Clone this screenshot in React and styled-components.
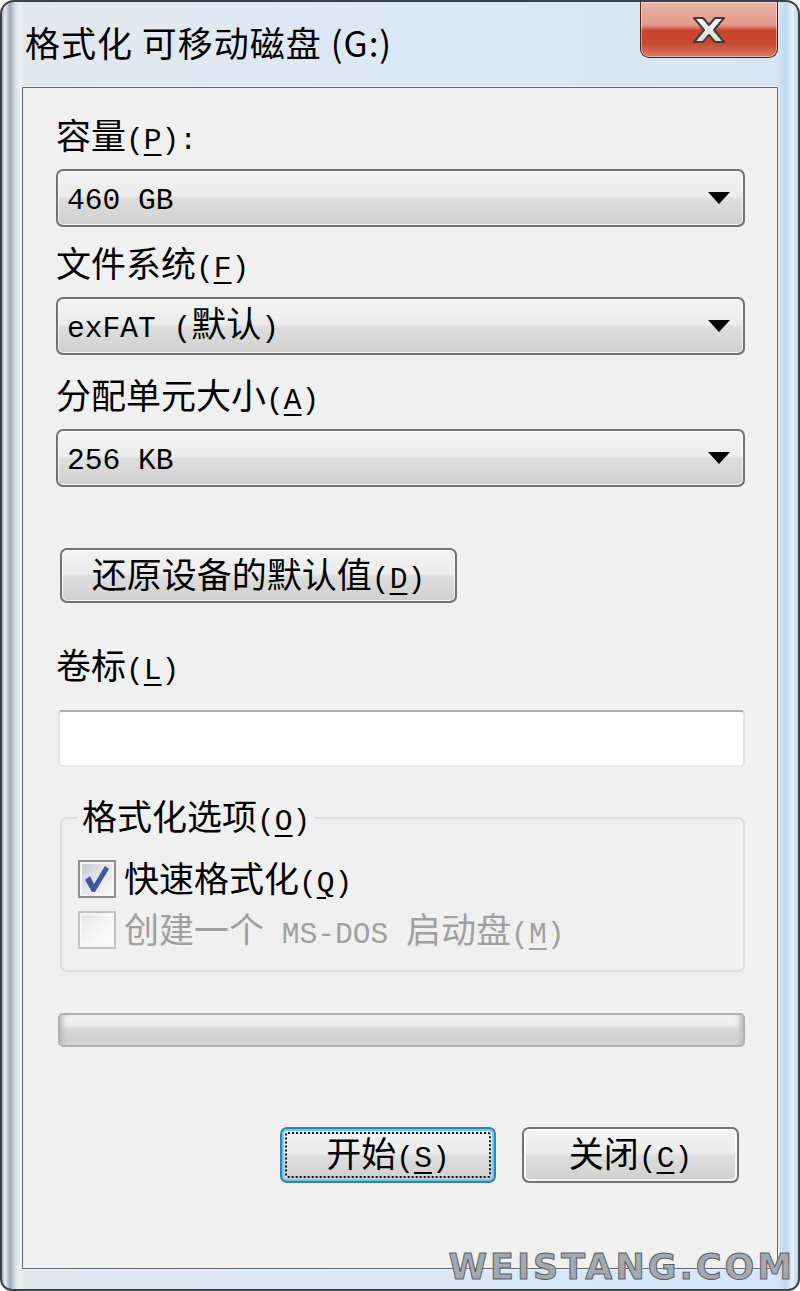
import styled, { createGlobalStyle } from 'styled-components'

const CJK = `"Noto Sans CJK SC", "Noto Sans", sans-serif`

const GlobalStyle = createGlobalStyle`
	html, body {
		margin: 0;
		padding: 0;
		background: #fff;
	}
	* {
		box-sizing: border-box;
	}
`

// renders a Windows style caption: ascii runs half width, "&X" underlined mnemonic
function Caption({ text }) {
	const out = []
	let buf = ''
	let half = null
	const flush = () => {
		if (!buf) return
		out.push(half ? <Half key={out.length}>{buf}</Half> : <span key={out.length}>{buf}</span>)
		buf = ''
	}
	for (let i = 0; i < text.length; i++) {
		const c = text[i]
		if (c === '&') {
			flush()
			i++
			out.push(
				<Half key={out.length}>
					<u>{text[i]}</u>
				</Half>
			)
			half = true
			continue
		}
		const h = c.charCodeAt(0) < 128
		if (h !== half) flush()
		half = h
		buf += c
	}
	flush()
	return <Line>{out}</Line>
}

export default function App() {
	return (
		<>
			<GlobalStyle />
			<Window>
				<TitleBar>
					<Title>格式化 可移动磁盘 (G:)</Title>
					<CloseButton>
						<svg width='36' height='28' viewBox='0 0 36 28'>
							<defs>
								<linearGradient id='xg' x1='0' y1='0' x2='0' y2='1'>
									<stop offset='0' stopColor='#ffffff' />
									<stop offset='1' stopColor='#d9d9d9' />
								</linearGradient>
							</defs>
							<path
								d='M3 2 L12 2 L18 9 L24 2 L33 2 L23 14 L33 26 L24 26 L18 19 L12 26 L3 26 L13 14 Z'
								fill='url(#xg)'
								stroke='#3d3d3d'
								strokeWidth='2'
								strokeLinejoin='round'
							/>
						</svg>
					</CloseButton>
				</TitleBar>

				<Client>
					<Label>
						<Caption text='容量(&P):' />
					</Label>
					<Combo>
						<Caption text='460 GB' />
						<Arrow />
					</Combo>

					<Label $top={18}>
						<Caption text='文件系统(&F)' />
					</Label>
					<Combo>
						<Caption text='exFAT (默认)' />
						<Arrow />
					</Combo>

					<Label $top={22}>
						<Caption text='分配单元大小(&A)' />
					</Label>
					<Combo>
						<Caption text='256 KB' />
						<Arrow />
					</Combo>

					<RestoreButton>
						<Caption text='还原设备的默认值(&D)' />
					</RestoreButton>

					<Label $top={44}>
						<Caption text='卷标(&L)' />
					</Label>
					<TextBox />

					<Group>
						<Legend>
							<Caption text='格式化选项(&O)' />
						</Legend>
						<CheckRow $top={21}>
							<Box>
								<svg width='28' height='30' viewBox='0 0 28 30'>
									<path d='M2 16 L7 12 L11 20 L22 2 L26 5 L12 28 L9 28 Z' fill='#3f5a9c' />
								</svg>
							</Box>
							<Caption text='快速格式化(&Q)' />
						</CheckRow>
						<CheckRow $top={11} $disabled>
							<Box $disabled />
							<Caption text='创建一个 MS-DOS 启动盘(&M)' />
						</CheckRow>
					</Group>

					<Progress />

					<ButtonRow>
						<PushButton $w={216} $default>
							<Focus>
								<Caption text='开始(&S)' />
							</Focus>
						</PushButton>
						<PushButton $w={217}>
							<Focus $none>
								<Caption text='关闭(&C)' />
							</Focus>
						</PushButton>
					</ButtonRow>
				</Client>

				<Watermark>WEISTANG.COM</Watermark>
			</Window>
		</>
	)
}

function Arrow() {
	return (
		<svg width='22' height='12' viewBox='0 0 22 12'>
			<path d='M0 0 H22 L11 12 Z' fill='#000' />
		</svg>
	)
}

const Window = styled.div`
	position: relative;
	width: 800px;
	height: 1291px;
	display: flex;
	flex-direction: column;
	padding: 0 20px 20px;
	border: 2px solid #39414b;
	border-radius: 14px 14px 12px 12px;
	overflow: hidden;
	background:
		linear-gradient(to right, #aab3bc 0px, #e9eef3 3px, #9ea9b4 8px, #d5dde5 13px, #eef2f6 18px, rgba(255, 255, 255, 0) 22px),
		linear-gradient(to left, #b9cfe6 0px, #e8f1fa 5px, #c3d8ee 12px, rgba(255, 255, 255, 0) 22px),
		linear-gradient(to right, #e3e7ec 0%, #dfe9f4 30%, #d6e6f6 100%);
`

const TitleBar = styled.div`
	height: 85px;
	display: flex;
	justify-content: space-between;
	align-items: flex-start;
`

const Title = styled.div`
	padding: 20px 0 0 3px;
	font-family: ${CJK};
	font-size: 35px;
	line-height: 40px;
	letter-spacing: 1px;
	color: #000;
	white-space: nowrap;
`

const CloseButton = styled.div`
	width: 138px;
	height: 56px;
	display: flex;
	align-items: center;
	justify-content: center;
	border: 1px solid #4d211a;
	border-top: none;
	border-radius: 0 0 9px 9px;
	background: linear-gradient(to bottom, #ebb2a8 0%, #e39a8b 42%, #c8432c 52%, #c9492f 75%, #d97b62 100%);
	box-shadow: inset 0 0 0 1px rgba(255, 255, 255, 0.45);
`

const Client = styled.div`
	flex: 1;
	display: flex;
	flex-direction: column;
	align-items: stretch;
	padding: 29px 32px 0 33px;
	background: #f0f0f0;
	border: 1px solid #5c6774;
	box-shadow: 0 0 0 1px rgba(255, 255, 255, 0.55);
	font-family: ${CJK};
	font-size: 35px;
	line-height: 40px;
	color: #000;
`

const Line = styled.span`
	white-space: nowrap;
`

const Half = styled.span`
	font-family: 'Liberation Mono', monospace;
	font-size: 29.6px;
	line-height: 1;
	white-space: pre;

	u {
		text-decoration-thickness: 2px;
		text-underline-offset: 5px;
	}
`

const Label = styled.div`
	margin-top: ${(p) => p.$top || 0}px;
	height: 40px;
	line-height: 34px;
`

const Combo = styled.div`
	height: 58px;
	margin-top: 12px;
	display: flex;
	align-items: center;
	justify-content: space-between;
	padding: 0 13px 5px 9px;
	border: 2px solid #727272;
	border-radius: 7px;
	background: linear-gradient(to bottom, #f3f3f3 0%, #ececec 46%, #dddddd 52%, #d0d0d0 100%);
	box-shadow: inset 0 0 0 1px rgba(255, 255, 255, 0.75);

	svg {
		margin-top: 5px;
	}
`

const RestoreButton = styled.div`
	width: 397px;
	height: 55px;
	margin: 61px 0 0 4px;
	padding-bottom: 3px;
	display: flex;
	align-items: center;
	justify-content: center;
	border: 2px solid #727272;
	border-radius: 7px;
	background: linear-gradient(to bottom, #f3f3f3 0%, #ececec 46%, #dddddd 52%, #d0d0d0 100%);
	box-shadow: inset 0 0 0 1px rgba(255, 255, 255, 0.8);
`

const TextBox = styled.div`
	height: 57px;
	margin: 23px 0 0 2px;
	background: #fff;
	border: 2px solid #e2e3ea;
	border-top-color: #abadb3;
	border-bottom-color: #e3e9ef;
	border-radius: 4px;
`

const Group = styled.fieldset`
	margin: 31px 0 0 4px;
	padding: 0 0 20px 16px;
	min-inline-size: 0;
	border: 2px solid #d7dfe5;
	border-radius: 7px;
`

const Legend = styled.legend`
	margin-left: 0;
	padding: 0 4px;
	height: 40px;
	line-height: 34px;
`

const CheckRow = styled.div`
	margin-top: ${(p) => p.$top}px;
	height: 40px;
	display: flex;
	align-items: center;
	gap: 8px;
	line-height: 36px;
	color: ${(p) => (p.$disabled ? '#a0a0a0' : '#000')};
`

const Box = styled.span`
	width: 38px;
	height: 38px;
	flex: none;
	display: flex;
	align-items: center;
	justify-content: center;
	border: 2px solid ${(p) => (p.$disabled ? '#c2c2c2' : '#8d8e8e')};
	background: ${(p) =>
		p.$disabled
			? 'linear-gradient(135deg, #e4e4e4 0%, #f7f7f7 60%, #fdfdfd 100%)'
			: 'linear-gradient(135deg, #c4c9d0 0%, #e6e8eb 55%, #f8f8f8 100%)'};
	box-shadow: inset 0 0 0 2px #f6f6f6;
`

const Progress = styled.div`
	height: 34px;
	margin: 41px 0 0 2px;
	border: 2px solid #b0b0b0;
	border-radius: 5px;
	background: linear-gradient(to bottom, #f4f4f4 0%, #efefef 28%, #d6d6d6 50%, #cfcfcf 78%, #dadada 100%);
	box-shadow: inset 6px 0 5px -3px #bdbdbd, inset -6px 0 5px -3px #bdbdbd;
`

const ButtonRow = styled.div`
	margin-top: 80px;
	padding-right: 6px;
	display: flex;
	justify-content: flex-end;
	gap: 26px;
`

const PushButton = styled.div`
	width: ${(p) => p.$w}px;
	height: 56px;
	display: flex;
	padding: 3px;
	border: 2px solid ${(p) => (p.$default ? '#3b7fb3' : '#727272')};
	border-radius: 7px;
	background: linear-gradient(to bottom, #f3f3f3 0%, #ececec 46%, #dddddd 52%, #d0d0d0 100%);
	box-shadow: inset 0 0 0 2px ${(p) => (p.$default ? '#5fcff8' : 'rgba(255, 255, 255, 0.8)')};
`

const Focus = styled.div`
	flex: 1;
	display: flex;
	align-items: center;
	justify-content: center;
	padding-bottom: 3px;
	border: 2px dotted ${(p) => (p.$none ? 'transparent' : '#111')};
	border-radius: 3px;
`

const Watermark = styled.div`
	position: absolute;
	right: 3px;
	bottom: 4px;
	font-family: 'DejaVu Sans', sans-serif;
	font-weight: bold;
	font-size: 35px;
	line-height: 35px;
	letter-spacing: 3px;
	color: #a3a9b0;
	-webkit-text-stroke: 1px #5a6068;
	text-shadow: 0 0 2px rgba(255, 255, 255, 0.8);
`
